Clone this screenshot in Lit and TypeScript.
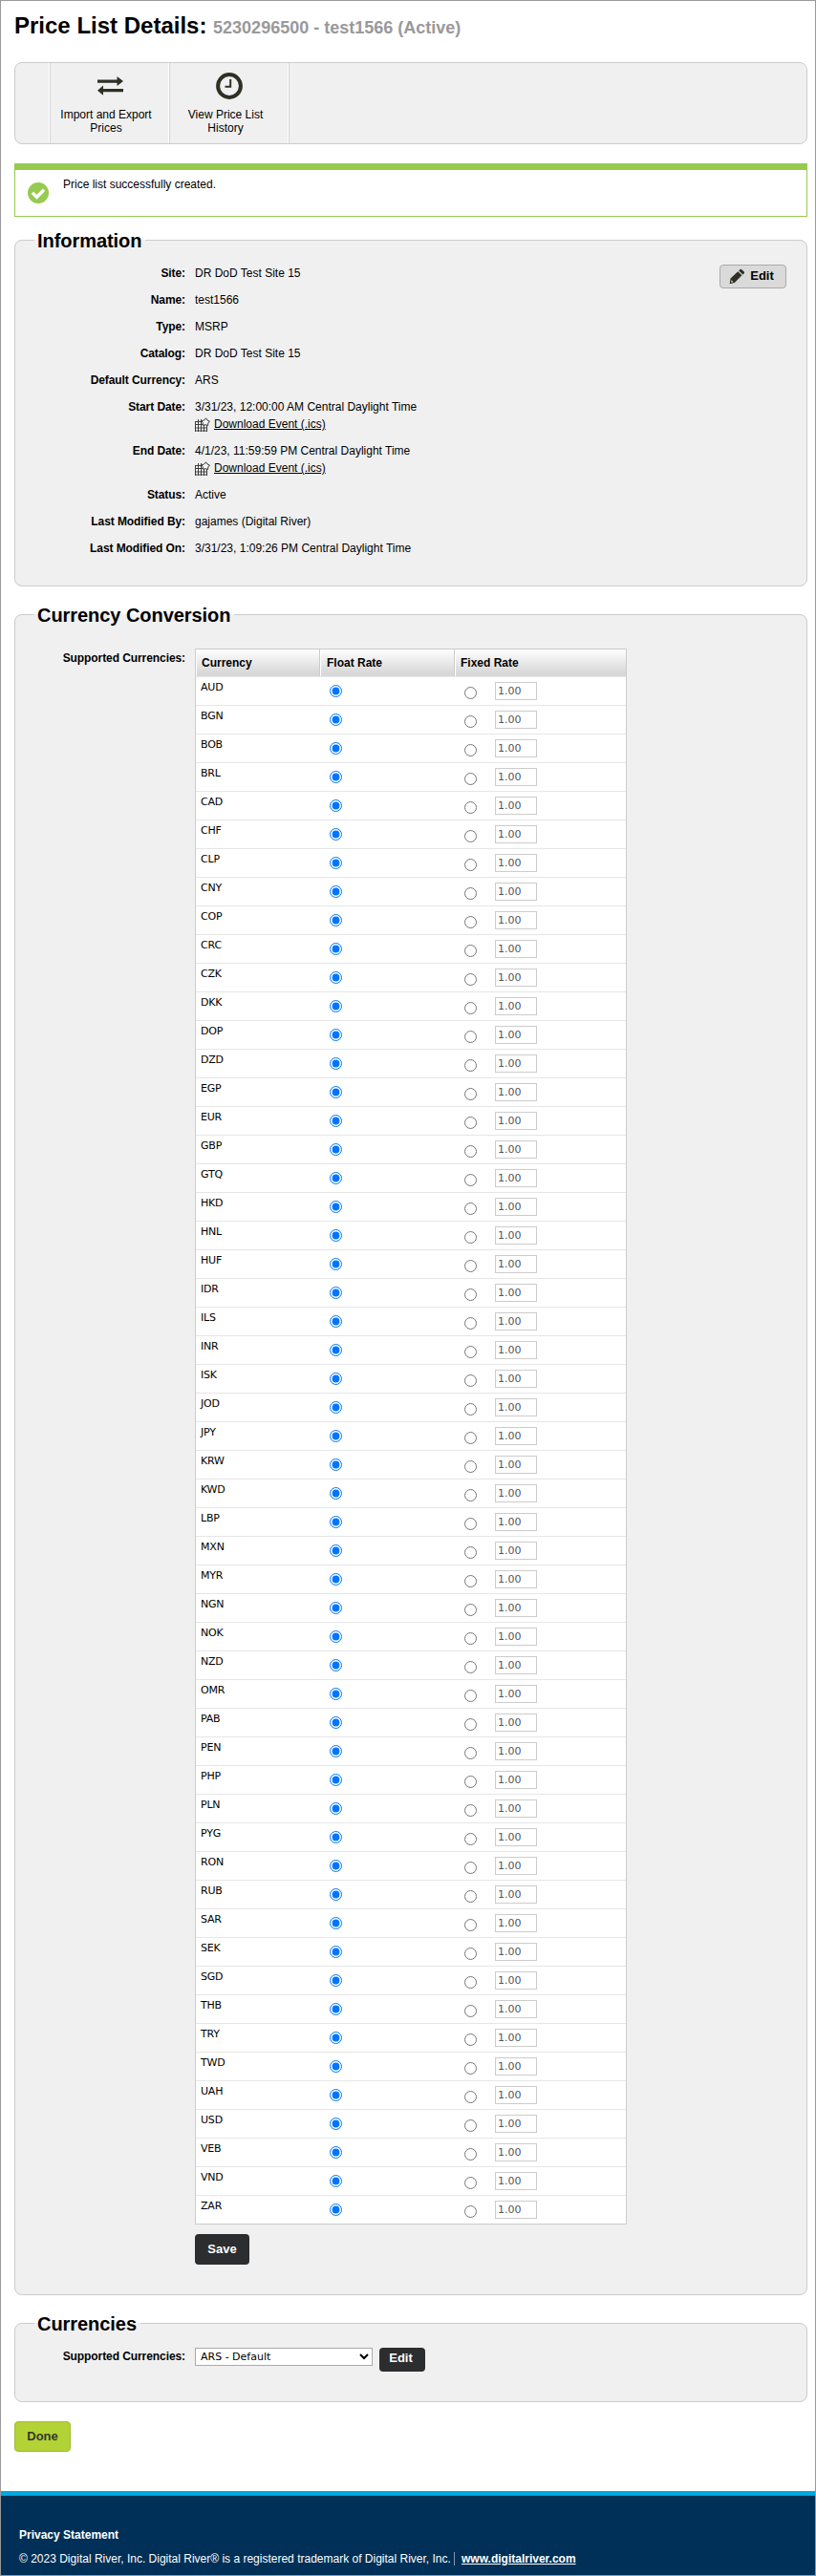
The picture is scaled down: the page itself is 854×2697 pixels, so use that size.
import { LitElement, html, css, svg } from "lit";
import { customElement } from "lit/decorators.js";

const CURRENCIES = (
  "AUD BGN BOB BRL CAD CHF CLP CNY COP CRC CZK DKK DOP DZD EGP EUR GBP GTQ " +
  "HKD HNL HUF IDR ILS INR ISK JOD JPY KRW KWD LBP MXN MYR NGN NOK NZD OMR " +
  "PAB PEN PHP PLN PYG RON RUB SAR SEK SGD THB TRY TWD UAH USD VEB VND ZAR"
).split(" ");

interface InfoRow {
  label: string;
  value: string;
  download?: boolean;
}

const INFO: InfoRow[] = [
  { label: "Site:", value: "DR DoD Test Site 15" },
  { label: "Name:", value: "test1566" },
  { label: "Type:", value: "MSRP" },
  { label: "Catalog:", value: "DR DoD Test Site 15" },
  { label: "Default Currency:", value: "ARS" },
  { label: "Start Date:", value: "3/31/23, 12:00:00 AM Central Daylight Time", download: true },
  { label: "End Date:", value: "4/1/23, 11:59:59 PM Central Daylight Time", download: true },
  { label: "Status:", value: "Active" },
  { label: "Last Modified By:", value: "gajames (Digital River)" },
  { label: "Last Modified On:", value: "3/31/23, 1:09:26 PM Central Daylight Time" },
];

const arrowsIcon = html`<svg class="tool-icon" width="28" height="28" viewBox="-1 0 28 28">
  ${svg`<path fill="#2f3025" d="M0 7.500H20.500V4L27 9 20.500 14V10.700H0zM27 17H6V13.500L0 18.800 6 23.700V20.300H27z"/>`}
</svg>`;

const clockIcon = html`<svg class="tool-icon" width="28" height="28" viewBox="0 0 28 28">
  ${svg`<circle cx="14" cy="14" r="11.900" fill="none" stroke="#2f3025" stroke-width="4"/>
  <path d="M15.200 7V14.800H9.500" fill="none" stroke="#2f3025" stroke-width="2"/>`}
</svg>`;

const checkIcon = html`<svg class="check" width="22" height="22" viewBox="0 0 22 22">
  ${svg`<circle cx="11" cy="11" r="11" fill="#96ca50"/>
  <path d="M4.800 10.800L9.500 15.300 17 7.700" fill="none" stroke="#fff" stroke-width="3.400"/>`}
</svg>`;

const pencilIcon = html`<svg width="17" height="17" viewBox="0 0 17 17">
  ${svg`<path fill="#2f3025" fill-rule="evenodd" d="M.7 16.200L1.500 10.600 9.300 3.200 13.500 7.300 5.800 15zM2.500 12.200L2.200 14.700 4.600 14.300zM10.200 2.400L11.700 1Q12.500.5 13.300 1.200L15.800 3.600Q16.400 4.400 15.800 5.200L14.400 6.500z"/>`}
</svg>`;

const calendarIcon = html`<svg class="cal" width="16" height="15" viewBox="0 0 16 15">
  ${svg`<path fill="#f8f8f8" d="M0 4H13V15H0z"/>
  <path fill="none" stroke="#3c3c3c" d="M.5 4V15M12.500 7V15M0 4.500H8M0 7.500H13M0 11H13M0 14H13M3.500 2V15M6.500 2V15M9.500 8V15"/>
  <path fill="#f6f6f6" stroke="#3c3c3c" d="M11.500.8L13 3 15.400 4 13.800 6 13.600 8.400 11 7.800 8.300 8.300 8.200 5.500 7 3.800 9.700 3z"/>`}
</svg>`;

@customElement("app-root")
export class AppRoot extends LitElement {
  static styles = css`
    :host {
      display: flex;
      flex-direction: column;
      box-sizing: border-box;
      width: 854px;
      height: 2697px;
      border: 1px solid #999;
      background: #fff;
      color: #000;
      font: 12px/14px "Liberation Sans", Arial, sans-serif;
    }
    * {
      box-sizing: border-box;
    }
    main {
      padding: 0 8px 0 14px;
      flex: 1;
    }
    h1 {
      margin: 0;
      height: 64px;
      padding-top: 12px;
      font-size: 24px;
      line-height: 28px;
      white-space: nowrap;
    }
    h1 small {
      font-size: 18px;
      color: #999;
    }
    .toolbar {
      display: flex;
      height: 86px;
      padding-left: 35px;
      border: 1px solid #ccc;
      border-radius: 8px;
      background: #f0f0f0;
    }
    .tool {
      width: 125px;
      padding: 10px 6px 0 0;
      border-left: 1px solid #fff;
      box-shadow: inset 1px 0 #d5d5d5;
      text-align: center;
    }
    .tool-end {
      border-left: 1px solid #fff;
      box-shadow: inset 1px 0 #d5d5d5;
      width: 2px;
    }
    .tool-icon {
      display: block;
      margin: 0 auto 9px 49px;
    }
    .alert {
      display: flex;
      height: 56px;
      margin-top: 20px;
      padding: 8px 0 0 13px;
      border: 1px solid #96ca50;
      border-top-width: 7px;
    }
    .check {
      margin: 5px 15px 0 0;
    }
    fieldset {
      min-width: 0;
      margin: 0;
      padding: 13px 21px 0 20px;
      border: 1px solid #ccc;
      border-radius: 8px;
      background: #f0f0f0;
    }
    .information {
      margin-top: 12px;
      height: 375px;
    }
    .conversion {
      margin-top: 17px;
      height: 1772px;
    }
    .currencies {
      margin-top: 17px;
      height: 95px;
    }
    legend {
      height: 25px;
      padding: 0 4px 0 3px;
      font-size: 20px;
      font-weight: bold;
      line-height: 26px;
      letter-spacing: -0.05px;
    }
    .cols {
      display: flex;
      align-items: flex-start;
    }
    .info {
      flex: 1;
      margin: 2px 0 0;
    }
    .pair {
      display: flex;
      gap: 10px;
      margin-bottom: 14px;
    }
    .label,
    dt {
      width: 158px;
      flex: none;
      font-weight: bold;
      text-align: right;
      white-space: nowrap;
      letter-spacing: -0.08px;
    }
    dd {
      margin: 0;
    }
    .dl {
      display: flex;
      height: 18px;
      padding-top: 4px;
    }
    .dl a {
      color: #000;
      text-decoration: underline;
    }
    .cal {
      margin: 0 4px 0 0;
    }
    button {
      display: flex;
      align-items: center;
      justify-content: center;
      margin: 0;
      padding: 0;
      border-radius: 4px;
      font: bold 13px/16px "Liberation Sans", Arial, sans-serif;
    }
    .edit {
      width: 70px;
      height: 25px;
      gap: 5px;
      padding: 0 3px 2px 0;
      border: 1px solid #aaa;
      background: #dadada;
    }
    .edit svg {
      margin-top: 2px;
    }
    .dark {
      border: 0;
      background: #2c2d2f;
      color: #fff;
    }
    .save {
      width: 57px;
      height: 32px;
      margin-top: 10px;
      padding-bottom: 1px;
    }
    .edit-dark {
      width: 48px;
      height: 25px;
      margin-left: 7px;
      padding: 0 3px 3px 0;
    }
    .label.conv {
      margin: 13px 10px 0 0;
    }
    .grid {
      width: 452px;
      margin-top: 10px;
      border: 1px solid #ccc;
      background: #fff;
      font: 11px/14px "DejaVu Sans", Verdana, sans-serif;
    }
    .conversion .cols {
      padding-top: 0;
    }
    .row {
      display: grid;
      grid-template-columns: 130px 141px 1fr;
      height: 30px;
      border-bottom: 1px solid #e6e6e6;
    }
    .row:last-child {
      height: 29px;
      border-bottom: 0;
    }
    .head {
      height: 29px;
      background: linear-gradient(#fff, #d8d8d8 88%);
      font: bold 12px/14px "Liberation Sans", Arial, sans-serif;
    }
    .head span {
      padding: 7px 0 0 5px;
      border-left: 1px solid #fff;
      border-right: 1px solid #ccc;
    }
    .head span:nth-child(2) {
      padding-left: 6px;
    }
    .head span:last-child {
      border-right: 0;
    }
    .code {
      padding: 4px 0 0 5px;
      letter-spacing: -0.2px;
    }
    input[type="radio"] {
      display: block;
      width: 13px;
      height: 13px;
      margin: 8px 0 0 10px;
    }
    .fixed {
      display: flex;
    }
    .fixed input[type="radio"] {
      margin: 10px 19px 0 10px;
    }
    .rate {
      width: 44px;
      height: 19px;
      margin: 5px 0 0;
      padding: 0 2px 1px;
      border: 1px solid #ccc;
      background: #fff;
      color: #555;
      font: 11px/16px "DejaVu Sans", Verdana, sans-serif;
    }
    select {
      width: 186px;
      height: 19px;
      margin: 0 0 0 10px;
      padding: 0 0 0 1px;
      border: 1px solid #aaa;
      border-radius: 0;
      background-color: #fff;
      color: #000;
      font: 11px/15px "DejaVu Sans", Verdana, sans-serif;
    }
    .currencies .label {
      padding-top: 2px;
    }
    .done {
      width: 59px;
      height: 32px;
      margin-top: 20px;
      padding-bottom: 1px;
      border: 1px solid #9fbc30;
      background: #b2d235;
      color: #33382b;
    }
    footer {
      height: 88px;
      border-top: 5px solid #00a7e1;
      background: #003057;
      color: #fff;
      font-weight: bold;
      padding: 34px 0 0 19px;
      white-space: nowrap;
    }
    footer div + div {
      display: flex;
      margin-top: 11px;
    }
    .copy {
      width: 451px;
      font-weight: normal;
    }
    footer a {
      margin-left: 2px;
      padding-left: 5px;
      color: #fff;
    }
    .bar {
      width: 1px;
      height: 14px;
      margin: 0 0 0 4px;
      background: #8897a8;
    }
  `;

  private infoRow(r: InfoRow) {
    return html`<div class="pair">
      <dt>${r.label}</dt>
      <dd>
        ${r.value}
        ${r.download
          ? html`<div class="dl">${calendarIcon}<a>Download Event (.ics)</a></div>`
          : null}
      </dd>
    </div>`;
  }

  private currencyRow(code: string) {
    return html`<div class="row">
      <span class="code">${code}</span>
      <span><input type="radio" name=${code} checked /></span>
      <span class="fixed">
        <input type="radio" name=${code} />
        <input class="rate" type="text" value="1.00" />
      </span>
    </div>`;
  }

  render() {
    return html`
      <main>
        <h1>Price List Details: <small>5230296500 - test1566 (Active)</small></h1>
        <nav class="toolbar">
          <div class="tool">${arrowsIcon}Import and Export<br />Prices</div>
          <div class="tool">${clockIcon}View Price List<br />History</div>
          <div class="tool-end"></div>
        </nav>
        <div class="alert">${checkIcon}<span>Price list successfully created.</span></div>
        <fieldset class="information">
          <legend>Information</legend>
          <div class="cols">
            <dl class="info">${INFO.map((r) => this.infoRow(r))}</dl>
            <button class="edit">${pencilIcon}Edit</button>
          </div>
        </fieldset>
        <fieldset class="conversion">
          <legend>Currency Conversion</legend>
          <div class="cols">
            <div class="label conv">Supported Currencies:</div>
            <div>
              <div class="grid">
                <div class="row head">
                  <span>Currency</span><span>Float Rate</span><span>Fixed Rate</span>
                </div>
                ${CURRENCIES.map((c) => this.currencyRow(c))}
              </div>
              <button class="dark save">Save</button>
            </div>
          </div>
        </fieldset>
        <fieldset class="currencies">
          <legend>Currencies</legend>
          <div class="cols">
            <div class="label">Supported Currencies:</div>
            <select>
              <option>ARS - Default</option>
            </select>
            <button class="dark edit-dark">Edit</button>
          </div>
        </fieldset>
        <button class="done">Done</button>
      </main>
      <footer>
        <div>Privacy Statement</div>
        <div>
          <span class="copy">© 2023 Digital River, Inc. Digital River® is a registered trademark of Digital River, Inc.</span>
          <span class="bar"></span>
          <a href="#">www.digitalriver.com</a>
        </div>
      </footer>
    `;
  }
}
